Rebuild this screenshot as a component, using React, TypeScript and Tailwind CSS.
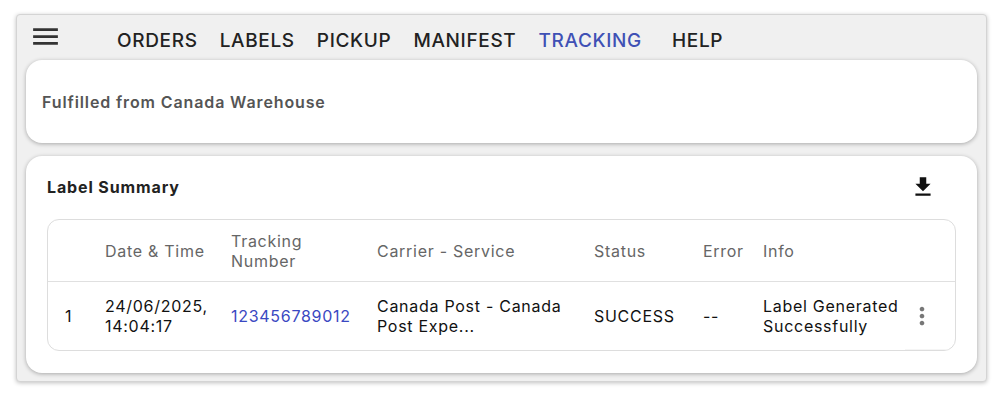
const navItems = ["ORDERS", "LABELS", "PICKUP", "MANIFEST", "TRACKING", "HELP"];

function MenuIcon() {
  return (
    <svg viewBox="0 0 24 24" className="h-[33px] w-[33px] fill-[#333]">
      <path d="M3 18h18v-2H3v2zm0-5h18v-2H3v2zm0-7v2h18V6H3z" />
    </svg>
  );
}

function DownloadIcon() {
  return (
    <svg viewBox="0 0 24 24" className="h-[26px] w-[26px] fill-[#111]">
      <path d="M5 20h14v-2H5v2zM19 9h-4V3H9v6H5l7 7 7-7z" />
    </svg>
  );
}

function MoreIcon() {
  return (
    <svg viewBox="0 0 24 24" className="h-[28px] w-[28px] fill-[#777]">
      <path d="M12 8c1.1 0 2-.9 2-2s-.9-2-2-2-2 .9-2 2 .9 2 2 2zm0 2c-1.1 0-2 .9-2 2s.9 2 2 2 2-.9 2-2-.9-2-2-2zm0 6c-1.1 0-2 .9-2 2s.9 2 2 2 2-.9 2-2-.9-2-2-2z" />
    </svg>
  );
}

const cols = "grid grid-cols-[41px_126px_146px_217px_109px_60px_158px_1fr]";

export default function App() {
  return (
    <div className="h-[393px] w-[1000px] bg-white pl-[16px] pt-[14px] font-['Inter',sans-serif] tracking-[0.045em]">
      <div className="flex h-[368px] w-[971px] flex-col rounded-[4px] border border-[#d4d4d4] bg-[#f0f0f0] shadow-[0_1px_4px_rgba(0,0,0,0.25)]">
        <header className="flex h-[45px] items-center">
          <div className="ml-[12px] mt-[-2px]">
            <MenuIcon />
          </div>
          <nav className="ml-[55px] mt-[6px] flex text-[19px] font-medium leading-none tracking-[0.035em] text-[#222]">
            {navItems.map((item) => (
              <span
                key={item}
                className={
                  item === "TRACKING"
                    ? "mr-[30px] text-[#3f51b5]"
                    : "mr-[22px]"
                }
              >
                {item}
              </span>
            ))}
          </nav>
        </header>

        <div className="mx-[9px] flex flex-col gap-[13px]">
          <section className="flex h-[83px] items-center rounded-[16px] bg-white px-[16px] shadow-[0_1px_4px_rgba(0,0,0,0.3)]">
            <p className="text-[16px] font-semibold tracking-[0.055em] text-[#555]">
              Fulfilled from Canada Warehouse
            </p>
          </section>

          <section className="h-[217px] rounded-[16px] bg-white px-[21px] pt-[18px] shadow-[0_1px_4px_rgba(0,0,0,0.3)]">
            <div className="flex h-[26px] items-center justify-between">
              <h2 className="text-[16px] font-bold tracking-[0.055em] text-[#222]">Label Summary</h2>
              <div className="mr-[20px]">
                <DownloadIcon />
              </div>
            </div>

            <div className="mt-[19px] overflow-hidden rounded-[12px] border border-[#ddd] text-[16px] leading-[20px]">
              <div className={`${cols} h-[62px] items-center border-b border-[#e0e0e0] text-[#666]`}>
                <div />
                <div className="pl-[16px]">Date &amp; Time</div>
                <div className="pl-[16px]">
                  Tracking
                  <br />
                  Number
                </div>
                <div className="pl-[16px]">Carrier - Service</div>
                <div className="pl-[16px]">Status</div>
                <div className="pl-[16px]">Error</div>
                <div className="pl-[16px]">Info</div>
                <div />
              </div>
              <div className={`${cols} h-[68px] items-center text-[#111]`}>
                <div className="pl-[17px]">1</div>
                <div className="pl-[16px]">
                  24/06/2025,
                  <br />
                  14:04:17
                </div>
                <div className="pl-[16px] text-[#3a48c2]">123456789012</div>
                <div className="pl-[16px]">
                  Canada Post - Canada
                  <br />
                  Post Expe...
                </div>
                <div className="pl-[16px]">SUCCESS</div>
                <div className="pl-[16px]">--</div>
                <div className="pl-[16px]">
                  Label Generated
                  <br />
                  Successfully
                </div>
                <div className="flex h-full items-center border-b border-[#f5f5f5] pl-[3px]">
                  <MoreIcon />
                </div>
              </div>
            </div>
          </section>
        </div>
      </div>
    </div>
  );
}
